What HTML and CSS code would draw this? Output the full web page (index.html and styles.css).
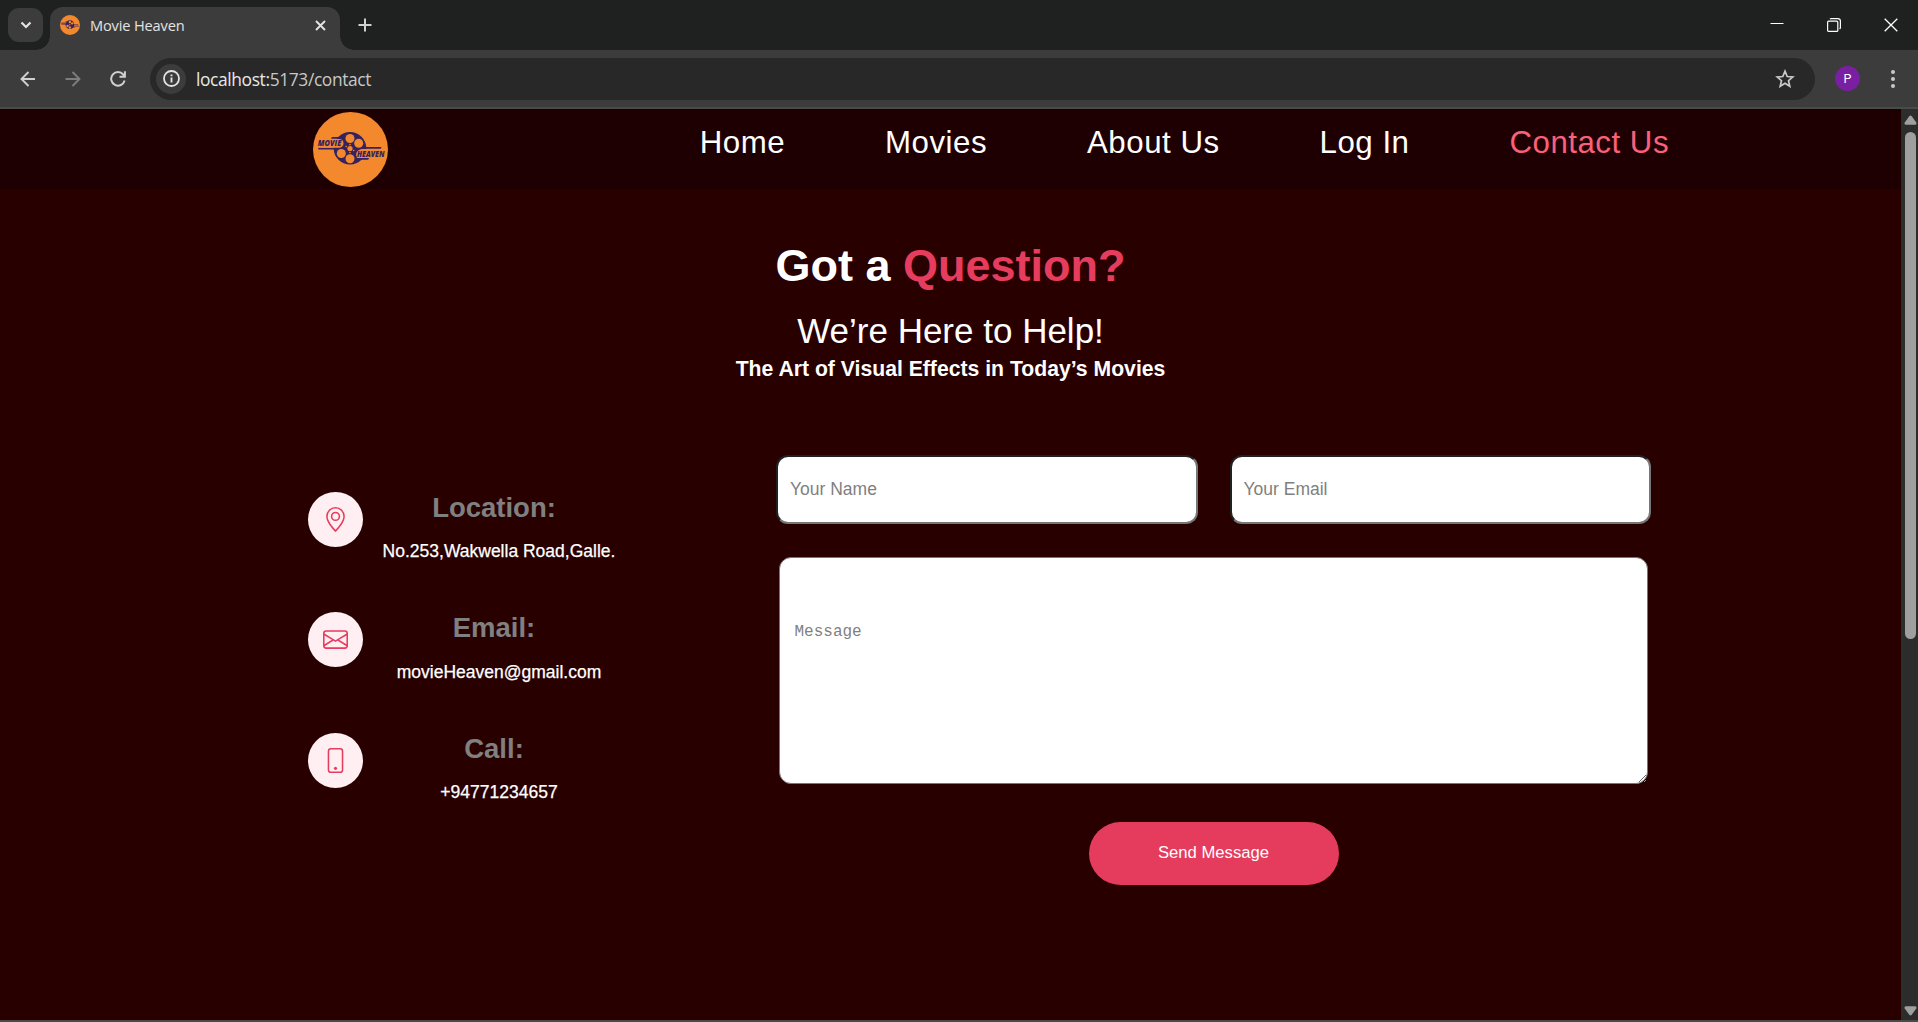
FILE: index.html
```html
<!DOCTYPE html>
<html lang="en">
<head>
<meta charset="utf-8">
<title>Movie Heaven</title>
<link rel="stylesheet" href="styles.css">
</head>
<body>
<div class="tabstrip">
  <div class="tab-search"><svg width="12" height="8" viewBox="0 0 12 8"><path d="M1.500 1.500 6 6l4.500-4.500" fill="none" stroke="#e3e3e3" stroke-width="2.200"/></svg></div>
  <div class="tab">
    <svg class="favicon" width="20" height="20" viewBox="0 0 75 75">
      <circle cx="37.5" cy="37.5" r="37.5" fill="#f4882c"/>
      <g fill="#35225f">
        <circle cx="37" cy="36.3" r="16.3"/>
        <path d="M19 25h12v1.700H18zM5 35.800h32v1.800H5.500zM37 35h31.500l-.8 1.700H37zM44 46h12l-.8 1.800H44z"/>
        <path d="M5 28.500h20v5H5zM48 39h23v5H48z" opacity=".6"/>
      </g>
      <g fill="#f4882c">
        <circle cx="37" cy="26.500" r="4.500"/><circle cx="45.700" cy="31.300" r="4.500"/>
        <circle cx="28.300" cy="41.500" r="4.500"/><circle cx="37" cy="46.700" r="4.500"/>
        <circle cx="37" cy="36.500" r="2.600"/>
      </g>
    </svg>
    <span class="tab-title">Movie Heaven</span>
    <svg class="tab-close" width="11" height="11" viewBox="0 0 11 11"><path d="M1 1l9 9M10 1l-9 9" stroke="#e3e3e3" stroke-width="1.900"/></svg>
  </div>
  <svg class="new-tab" width="14" height="14" viewBox="0 0 14 14"><path d="M7 .5v13M.5 7h13" stroke="#d0d0d0" stroke-width="2"/></svg>
  <div class="window-controls">
    <svg width="14" height="14" viewBox="0 0 14 14"><path d="M.5 5.500h13" stroke="#fff" stroke-width="1"/></svg>
    <svg width="14" height="14" viewBox="0 0 14 14" fill="none" stroke="#fff" stroke-width="1.200"><rect x=".6" y="3.200" width="10.200" height="10.200" rx="1"/><path d="M3 1.200Q3.400.6 4.500.6h6.300q2.600 0 2.600 2.600v6.300q0 1-.8 1.500"/></svg>
    <svg width="14" height="14" viewBox="0 0 14 14"><path d="M.7.7l12.600 12.600M13.300.7L.7 13.300" stroke="#fff" stroke-width="1.300"/></svg>
  </div>
</div>

<div class="toolbar">
  <svg class="nav-icon" width="16" height="16" viewBox="0 0 16 16" fill="none" stroke="#d0d0d0" stroke-width="1.900"><path d="M15 8H2M8.500 1 1.500 8l7 7"/></svg>
  <svg class="nav-icon forward" width="16" height="16" viewBox="0 0 16 16" fill="none" stroke="#7d7d7d" stroke-width="1.900"><path d="M.5 8H14M7.500 1l7 7-7 7"/></svg>
  <svg class="nav-icon reload" width="16" height="16" viewBox="0 0 16 16" fill="none" stroke="#d0d0d0" stroke-width="2"><path d="M14.600 9.500A6.800 6.800 0 1 1 13.300 3.600L14.800 5.300M14.900.3v5.400H9.500"/></svg>
  <div class="address">
    <div class="site-info"><svg width="17" height="17" viewBox="0 0 17 17"><circle cx="8.500" cy="8.500" r="7.500" fill="none" stroke="#e3e3e3" stroke-width="1.800"/><path d="M8.500 7.600v4.800M8.500 4.400v1.900" stroke="#e3e3e3" stroke-width="1.900"/></svg></div>
    <span class="url"><b>localhost:</b>5173/contact</span>
    <svg class="star" width="20" height="19" viewBox="0 0 20 19"><path d="M10 2.200l2.200 5.300 5.600.5-4.300 3.700 1.300 5.600-4.800-3-4.800 3 1.300-5.600L2.200 8l5.600-.5z" fill="none" stroke="#c9c9c9" stroke-width="1.700"/></svg>
  </div>
  <div class="avatar">P</div>
  <svg class="menu" width="4" height="18" viewBox="0 0 4 18" fill="#c9c9c9"><circle cx="2" cy="2" r="2"/><circle cx="2" cy="9" r="2"/><circle cx="2" cy="16" r="2"/></svg>
</div>

<div class="viewport">
  <main class="page">
    <header class="site-header">
      <svg class="brand" width="75" height="75" viewBox="0 0 75 75">
        <circle cx="37.5" cy="37.5" r="37.5" fill="#f4882c"/>
        <g fill="#35225f">
          <circle cx="37" cy="36.3" r="16.3"/>
          <path d="M19 25h12v1.700H18zM5 35.800h32v1.800H5.500zM37 35h31.500l-.8 1.700H37zM44 46h12l-.8 1.800H44z"/>
        </g>
        <path fill="#f4882c" d="M4 27h21.500q5 0 5 4.300t-5 4.500H4zM48.500 36.900H72v9.100H44q-3-7 4.500-9.100z"/>
        <g fill="#f4882c">
          <circle cx="37" cy="26.500" r="4.500"/><circle cx="45.700" cy="31.300" r="4.500"/>
          <circle cx="28.300" cy="41.500" r="4.500"/><circle cx="37" cy="46.700" r="4.500"/>
          <circle cx="37" cy="36.500" r="2.600"/>
          <circle cx="37" cy="32.600" r=".8"/><circle cx="40.700" cy="38.500" r=".8"/>
          <circle cx="33.200" cy="34.500" r=".8"/><circle cx="37" cy="40.500" r=".8"/>
        </g>
        <g fill="#35225f" class="logo-text">
          <text x="4.800" y="34.300" textLength="23.500" lengthAdjust="spacingAndGlyphs">MOVIE</text>
          <text x="44" y="44.700" textLength="27.500" lengthAdjust="spacingAndGlyphs">HEAVEN</text>
        </g>
      </svg>
      <nav class="site-nav">
        <a>Home</a><a>Movies</a><a>About Us</a><a>Log In</a><a class="active">Contact Us</a>
      </nav>
    </header>

    <section class="hero">
      <h1>Got a <span>Question?</span></h1>
      <h2>We’re Here to Help!</h2>
      <h3>The Art of Visual Effects in Today’s Movies</h3>
    </section>

    <section class="contact">
      <div class="info">
        <div class="info-item">
          <div class="badge"><svg width="25" height="25" viewBox="0 0 16 16"><path d="M12.166 8.940c-.524 1.062-1.234 2.120-1.960 3.070A32 32 0 0 1 8 14.580a32 32 0 0 1-2.206-2.570c-.726-.95-1.436-2.008-1.960-3.070C3.304 7.867 3 6.862 3 6a5 5 0 0 1 10 0c0 .862-.305 1.867-.834 2.940M8 16s6-5.686 6-10A6 6 0 0 0 2 6c0 4.314 6 10 6 10"/><path d="M8 8a2 2 0 1 1 0-4 2 2 0 0 1 0 4m0 1a3 3 0 1 0 0-6 3 3 0 0 0 0 6"/></svg></div>
          <div class="info-body"><h4>Location:</h4><p>No.253,Wakwella Road,Galle.</p></div>
        </div>
        <div class="info-item">
          <div class="badge"><svg width="25" height="25" viewBox="0 0 16 16"><path d="M0 4a2 2 0 0 1 2-2h12a2 2 0 0 1 2 2v8a2 2 0 0 1-2 2H2a2 2 0 0 1-2-2zm2-1a1 1 0 0 0-1 1v.217l7 4.200 7-4.200V4a1 1 0 0 0-1-1zm13 2.383-4.708 2.825L15 11.105zm-.034 6.876-5.640-3.471L8 9.583l-1.326-.795-5.640 3.470A1 1 0 0 0 2 13h12a1 1 0 0 0 .966-.741M1 11.105l4.708-2.897L1 5.383z"/></svg></div>
          <div class="info-body"><h4>Email:</h4><p>movieHeaven@gmail.com</p></div>
        </div>
        <div class="info-item">
          <div class="badge"><svg width="25" height="25" viewBox="0 0 16 16"><path d="M11 1a1 1 0 0 1 1 1v12a1 1 0 0 1-1 1H5a1 1 0 0 1-1-1V2a1 1 0 0 1 1-1zM5 0a2 2 0 0 0-2 2v12a2 2 0 0 0 2 2h6a2 2 0 0 0 2-2V2a2 2 0 0 0-2-2z"/><path d="M8 14a1 1 0 1 0 0-2 1 1 0 0 0 0 2"/></svg></div>
          <div class="info-body"><h4>Call:</h4><p>+94771234657</p></div>
        </div>
      </div>

      <form class="form">
        <div class="form-row">
          <input type="text" placeholder="Your Name">
          <input type="email" placeholder="Your Email">
        </div>
        <textarea placeholder="Message"></textarea>
        <button type="button">Send Message</button>
      </form>
    </section>
  </main>
  <div class="scrollbar">
    <svg width="13" height="10" viewBox="0 0 13 10"><path d="M5.300 1.200q1.200-1.400 2.400 0l4.600 6.300q.7 1.900-1 2.200H1.700Q0 9.400.7 7.500z" fill="#9f9f9f"/></svg>
    <div class="thumb"></div>
    <svg class="down" width="13" height="10" viewBox="0 0 13 10"><path d="M5.300 8.800q1.200 1.400 2.400 0l4.600-6.300q.7-1.900-1-2.200H1.700Q0 .6.700 2.500z" fill="#9f9f9f"/></svg>
  </div>
</div>
</body>
</html>
```

FILE: styles.css
```css
* { box-sizing: border-box; margin: 0; padding: 0; }

body {
  width: 1918px;
  height: 1022px;
  overflow: hidden;
  display: flex;
  flex-direction: column;
  background: #3c3c3c;
  font-family: "Liberation Sans", Arial, sans-serif;
}

svg { display: block; flex: none; }
.logo-text { font: italic 800 8.200px "Open Sans", sans-serif; }

/* Browser tab strip */
.tabstrip {
  height: 50px;
  flex: none;
  display: flex;
  background: #1f2120;
}
.tab-search {
  width: 35px;
  height: 34px;
  margin: 8px 7px 0 8px;
  border-radius: 11px;
  background: #3c3c3c;
  display: flex;
  align-items: center;
  justify-content: center;
}
.tab {
  position: relative;
  width: 290px;
  height: 43px;
  margin-top: 7px;
  padding: 0 14px 7px 10px;
  border-radius: 13px 13px 0 0;
  background: #3c3c3c;
  display: flex;
  align-items: center;
}
.tab::before, .tab::after {
  content: "";
  position: absolute;
  bottom: 0;
  width: 14px;
  height: 14px;
}
.tab::before { left: -14px; background: radial-gradient(circle at 0 0, transparent 13.500px, #3c3c3c 14px); }
.tab::after { right: -14px; background: radial-gradient(circle at 100% 0, transparent 13.500px, #3c3c3c 14px); }
.tab-title {
  flex: 1;
  margin-left: 10px;
  font: 14.600px/20px "Open Sans", sans-serif;
  letter-spacing: -.15px;
  color: #e3e3e3;
}
.new-tab { margin: 18px 0 0 18px; }
.window-controls {
  margin: 18px 20px 0 auto;
  display: flex;
  gap: 43px;
}

/* Browser toolbar */
.toolbar {
  height: 59px;
  flex: none;
  display: flex;
  align-items: center;
  padding: 0 23px 0 20px;
  background: #3c3c3c;
  border-bottom: 2px solid #484b4b;
}
.nav-icon.forward { margin-left: 29px; }
.nav-icon.reload { margin: 0 24px 0 29px; }
.address {
  width: 1665px;
  height: 42px;
  border-radius: 21px;
  background: #282828;
  display: flex;
  align-items: center;
  padding: 0 20px 0 6px;
}
.site-info {
  width: 30px;
  height: 30px;
  border-radius: 50%;
  background: #3c3c3c;
  display: flex;
  align-items: center;
  justify-content: center;
}
.url {
  flex: 1;
  margin: 1px 0 0 10px;
  font: 17.400px/24px "Open Sans", sans-serif;
  letter-spacing: -.38px;
  color: #c7c7c7;
}
.url b { font-weight: 400; color: #e8e8e8; }
.avatar {
  width: 25px;
  height: 25px;
  margin-left: 20px;
  border-radius: 50%;
  background: #7b1fa2;
  color: #fff;
  font: 12.500px/25px Roboto, sans-serif;
  text-align: center;
}
.menu { margin-left: auto; }

/* Page area */
.viewport {
  height: 913px;
  display: flex;
  border-bottom: 2px solid #484b4b;
}
.page { width: 1901px; background: #290000; }
.site-header {
  height: 80px;
  background: #1e0002;
  display: flex;
}
.brand { margin: 3px 0 0 313px; }
.site-nav {
  display: flex;
  gap: 100px;
  margin: 17px 0 0 311.700px;
  font-size: 31.250px;
  line-height: 34px;
  letter-spacing: .5px;
  color: #fff;
  white-space: nowrap;
}
.active { color: #fb607b; }

.hero {
  padding-top: 50px;
  color: #fff;
  text-align: center;
}
.hero h1 { font-size: 45px; line-height: 54px; }
.hero h1 span { color: #e63c5e; }
.hero h2 { margin-top: 18px; font-size: 35px; line-height: 40px; font-weight: 400; }
.hero h3 { margin-top: 6px; font-size: 21.200px; line-height: 24px; }

.contact {
  display: flex;
  margin-top: 74px;
  padding-left: 308px;
}
.info { width: 468px; padding-top: 37px; }
.info-item { display: flex; height: 120.400px; }
.badge {
  width: 55px;
  height: 55px;
  border-radius: 50%;
  background: #ffeff2;
  display: flex;
  align-items: center;
  justify-content: center;
}
.badge svg { fill: #e63c5e; }
.info-body { width: 262px; text-align: center; white-space: nowrap; }
.info-body h4 { font-size: 27.500px; line-height: 32px; color: #808080; }
.info-body p {
  margin-top: 17.200px;
  padding-left: 10px;
  font-size: 17.500px;
  line-height: 20px;
  color: #fff;
  -webkit-text-stroke: .25px #fff;
}

.form {
  width: 875px;
  display: flex;
  flex-direction: column;
  align-items: center;
}
.form-row { display: flex; gap: 32px; width: 100%; }
.form input {
  flex: 1;
  min-width: 0;
  height: 69px;
  padding: 0 12px 1px;
  border: 2px inset #767676;
  border-radius: 12px;
  background: #fff;
  font: 17.500px "Liberation Sans", Arial, sans-serif;
}
.form ::placeholder { color: #808080; }
.form textarea {
  width: 869px;
  height: 227px;
  margin-top: 33px;
  padding: 64px 14.500px;
  border: 1px solid #767676;
  border-radius: 12px;
  background: #fff;
  font: 16px/20px "Liberation Mono", Consolas, monospace;
}
.form button {
  width: 250px;
  height: 63px;
  margin-top: 38px;
  padding-bottom: 2px;
  border: 0;
  border-radius: 32px;
  background: #e53b5d;
  color: #fff;
  font: 16.670px "Liberation Sans", Arial, sans-serif;
}

.scrollbar {
  width: 17px;
  background: #2c2c2c;
  display: flex;
  flex-direction: column;
  align-items: center;
  padding: 6px 0 4px 2px;
}
.thumb { width: 11px; height: 507px; margin-top: 7px; border-radius: 6px; background: #9f9f9f; }
.down { margin-top: auto; }
```
